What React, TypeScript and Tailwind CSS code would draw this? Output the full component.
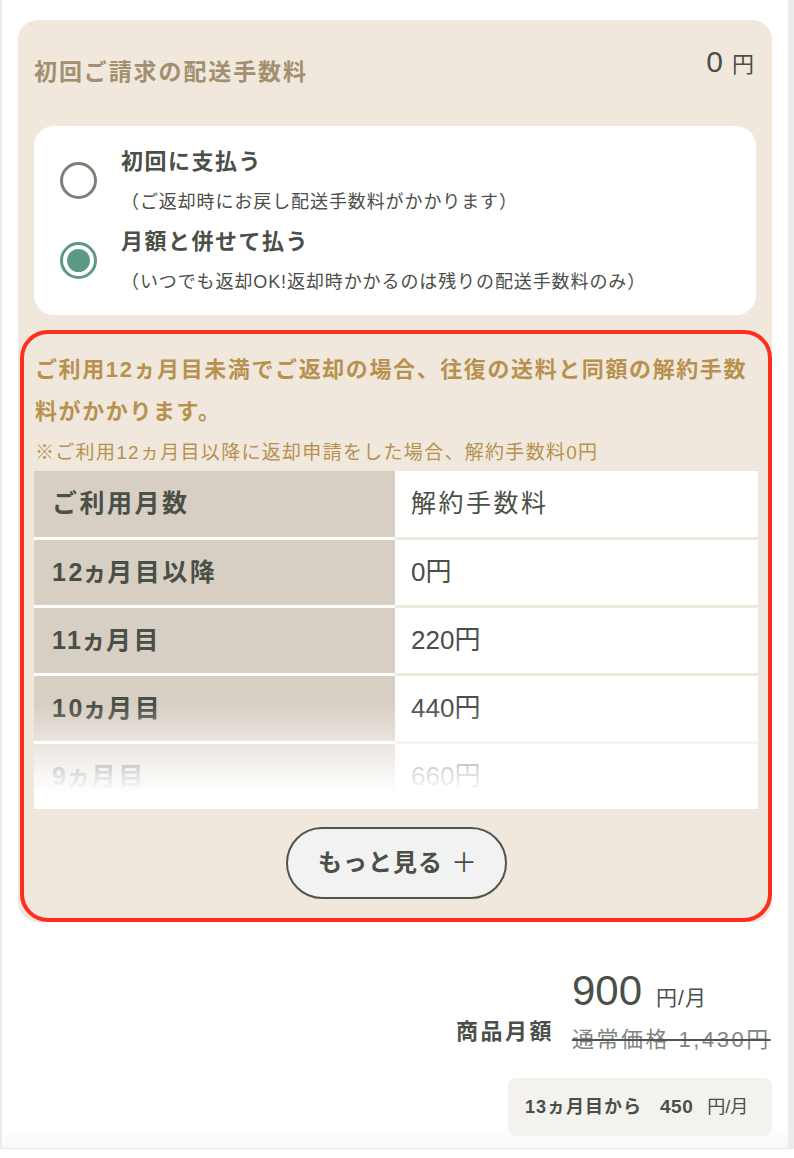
const jp = "font-['Liberation_Sans','Noto_Sans_CJK_JP',sans-serif]";

const rows = [
  { m: '12ヵ月目以降', fee: '0円' },
  { m: '11ヵ月目', fee: '220円' },
  { m: '10ヵ月目', fee: '440円' },
  { m: '9ヵ月目', fee: '660円' },
];

function Radio({ checked }: { checked?: boolean }) {
  return checked ? (
    <span className="flex h-[37px] w-[37px] shrink-0 items-center justify-center rounded-full border-[3px] border-[#5c9a88] bg-white">
      <span className="h-[23px] w-[23px] rounded-full bg-[#5c9a88]" />
    </span>
  ) : (
    <span className="h-[37px] w-[37px] shrink-0 rounded-full border-[3px] border-[#7b8175] bg-white" />
  );
}

export default function App() {
  return (
    <div className={`${jp} h-[1158px] w-[794px] bg-white text-[#4a4f48]`}>
      <div className="h-[1149px] border-b border-l-2 border-r-[6px] border-b-[#e6e6e6] border-l-[#ebebeb] border-r-[#ececec] bg-[linear-gradient(to_bottom,#fff_0,#fff_1128px,#f7f7f7_1148px)] px-4 pt-5">
        {/* shipping card */}
        <div className="rounded-[20px] bg-[#f0e8dc]">
          <div className="flex items-start justify-between px-4 pt-[22px]">
            <h2 className="mt-[14px] text-[23px] font-bold leading-[32px] tracking-[1.9px] text-[#a38f6f]">初回ご請求の配送手数料</h2>
            <div className="flex items-baseline gap-[9px] pr-[2px]">
              <span className="text-[30px] leading-[40px]">0</span>
              <span className="text-[22px]">円</span>
            </div>
          </div>

          <div className="mx-4 mt-[38px] rounded-[20px] bg-white px-[26px] pb-[21px] pt-[20px]">
            <div className="flex items-center gap-[24px]">
              <Radio />
              <div>
                <p className="text-[22px] font-bold leading-[32px] tracking-[1.5px]">初回に支払う</p>
                <p className="mt-[12px] text-[18px] leading-[24px] tracking-[0.9px]">（ご返却時にお戻し配送手数料がかかります）</p>
              </div>
            </div>
            <div className="mt-[12px] flex items-center gap-[24px]">
              <Radio checked />
              <div>
                <p className="text-[22px] font-bold leading-[32px] tracking-[1.5px]">月額と併せて払う</p>
                <p className="mt-[12px] text-[18px] leading-[24px] tracking-[0.9px]">（いつでも返却OK!返却時かかるのは残りの配送手数料のみ）</p>
              </div>
            </div>
          </div>

          {/* cancellation fee */}
          <div className="ml-[2px] mt-[15px] rounded-[28px] border-4 border-[#ff2d1f] pb-[19px] pl-[10px] pr-[10px] pt-[15px]">
            <p className="pl-px pr-[10px] text-[22px] font-bold leading-[42px] tracking-[1.6px] text-[#b8914f]">
              ご利用12ヵ月目未満でご返却の場合、往復の送料と同額の解約手数料がかかります。
            </p>
            <p className="mt-[8px] pl-px text-[19px] leading-[24px] tracking-[1.3px] text-[#b8914f]">
              ※ご利用12ヵ月目以降に返却申請をした場合、解約手数料0円
            </p>
            <div className="relative mt-[6px]">
              <div className="flex h-[66px] text-[25px] tracking-[2.5px]">
                <div className="flex w-[361px] items-center bg-[#d8cfc4] pl-[18px] font-bold">ご利用月数</div>
                <div className="flex flex-1 items-center bg-white pl-[16px]">解約手数料</div>
              </div>
              {rows.map((r) => (
                <div key={r.m} className="flex h-[68px]">
                  <div className="flex w-[361px] items-center border-t-[3px] border-white bg-[#d8cfc4] pl-[18px] text-[25px] font-bold tracking-[2.5px] [font-feature-settings:'palt']">{r.m}</div>
                  <div className="flex flex-1 items-center border-t-[3px] border-[#efe8dd] bg-white pl-[16px] text-[26px]">{r.fee}</div>
                </div>
              ))}
              <div className="absolute inset-x-0 bottom-0 h-[104px] bg-[linear-gradient(to_bottom,rgba(255,255,255,0)_0%,rgba(255,255,255,0.8)_65%,#fff_85%)]" />
            </div>
            <div className="mt-[18px] flex justify-center">
              <button className="flex h-[72px] w-[221px] items-center justify-center rounded-full border-2 border-[#4f544d] bg-[#f2f2f2] pl-[4px] text-[24px] font-bold tracking-[1px]">
                もっと見る<span className="ml-[8px] text-[26px] font-normal">＋</span>
              </button>
            </div>
          </div>
        </div>

        {/* price */}
        <div className="mt-[43px] flex items-end justify-end gap-[18px]">
          <span className="mb-[8px] text-[22px] font-bold leading-[28px] tracking-[2.5px]">商品月額</span>
          <div className="w-[200px]">
            <div className="flex items-baseline gap-[14px]">
              <span className="text-[42px] leading-[52px]">900</span>
              <span className="text-[21px] tracking-[1px]">円/月</span>
            </div>
            <p className="mt-[9px] whitespace-nowrap text-[22px] leading-[28px] tracking-[2.5px] text-[#7e877d] line-through decoration-[#4f544d] decoration-2">通常価格 1,430円</p>
          </div>
        </div>
        <div className="mt-[24px] flex justify-end">
          <div className="flex h-[58px] w-[264px] items-center gap-[18px] rounded-lg bg-[#f3f2ef] pl-[17px]">
            <span className="text-[18px] font-bold tracking-[1px]">13ヵ月目から</span>
            <span className="flex items-baseline gap-[14px]">
              <span className="text-[19px] font-bold tracking-[0.5px]">450</span>
              <span className="text-[18px]">円/月</span>
            </span>
          </div>
        </div>
      </div>
    </div>
  );
}
